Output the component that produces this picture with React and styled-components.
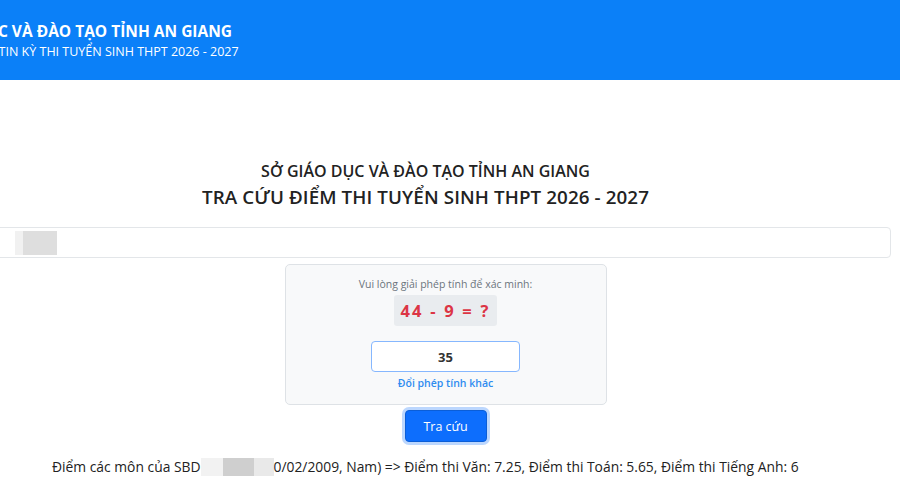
import React from "react";
import styled, { createGlobalStyle } from "styled-components";

const GlobalStyle = createGlobalStyle`
  html, body {
    margin: 0;
    padding: 0;
    background: #ffffff;
    overflow: hidden;
  }
  body {
    font-family: "Open Sans", "Noto Sans", sans-serif;
    color: #212529;
  }
`;

const App = () => {
  return (
    <>
      <GlobalStyle />
      <Header>
        <HeaderInner>
          <HeaderTitle>SỞ GIÁO DỤC VÀ ĐÀO TẠO TỈNH AN GIANG</HeaderTitle>
          <HeaderSub>THÔNG TIN KỲ THI TUYỂN SINH THPT 2026 - 2027</HeaderSub>
        </HeaderInner>
      </Header>

      <Main>
        <TitleBlock>
          <Dept>SỞ GIÁO DỤC VÀ ĐÀO TẠO TỈNH AN GIANG</Dept>
          <PageTitle>TRA CỨU ĐIỂM THI TUYỂN SINH THPT 2026 - 2027</PageTitle>
        </TitleBlock>

        <SearchField>
          <Redacted />
        </SearchField>

        <Captcha>
          <CaptchaHint>Vui lòng giải phép tính để xác minh:</CaptchaHint>
          <MathBox>44 - 9 = ?</MathBox>
          <AnswerInput defaultValue="35" />
          <SwapLink href="#">Đổi phép tính khác</SwapLink>
        </Captcha>

        <SubmitButton type="button">Tra cứu</SubmitButton>

        <Result>
          Điểm các môn của SBD<Masked />0/02/2009, Nam) =&gt; Điểm thi Văn: 7.25,
          Điểm thi Toán: 5.65, Điểm thi Tiếng Anh: 6
        </Result>
      </Main>
    </>
  );
};

// Styled Components
const Header = styled.header`
  height: 80px;
  background: #0b80f8;
  display: flex;
  align-items: center;
  overflow: hidden;
`;

const HeaderInner = styled.div`
  margin-top: 2px;
  color: #ffffff;
  white-space: nowrap;
`;

const HeaderTitle = styled.div`
  margin-left: -94px;
  font-size: 15.5px;
  font-weight: 700;
  line-height: 21px;
`;

const HeaderSub = styled.div`
  margin-left: -49px;
  font-size: 12.5px;
  font-weight: 400;
  line-height: 20px;
`;

const Main = styled.main`
  width: 911px;
  margin-left: -10px;
  padding-top: 81px;
  display: flex;
  flex-direction: column;
  align-items: center;
`;

const TitleBlock = styled.div`
  display: flex;
  flex-direction: column;
  align-items: center;
  padding-right: 40px;
  color: #222;
`;

const Dept = styled.div`
  font-size: 16px;
  font-weight: 600;
  line-height: 20px;
`;

const PageTitle = styled.h1`
  margin: 3px 0 0;
  font-size: 18.8px;
  font-weight: 600;
  line-height: 26px;
  letter-spacing: 0.1px;
`;

const SearchField = styled.div`
  box-sizing: border-box;
  align-self: flex-start;
  width: 901px;
  height: 31px;
  margin-top: 17px;
  border: 1px solid #e3e6e9;
  border-radius: 4px;
  background: #ffffff;
  display: flex;
  align-items: center;
  padding-left: 24px;
`;

const Redacted = styled.div`
  width: 42px;
  height: 24px;
  background: linear-gradient(90deg, #f1f1f1 0 20%, #dedede 20% 100%);
`;

const Captcha = styled.div`
  box-sizing: border-box;
  width: 322px;
  margin-top: 6px;
  padding: 12px 16px 13px;
  background: #f8f9fa;
  border: 1px solid #dee2e6;
  border-radius: 5px;
  display: flex;
  flex-direction: column;
  align-items: center;
`;

const CaptchaHint = styled.div`
  font-size: 10.5px;
  color: #6c757d;
  line-height: 14px;
`;

const MathBox = styled.div`
  margin-top: 4px;
  width: 103px;
  height: 31px;
  display: flex;
  align-items: center;
  justify-content: center;
  background: #e9ecef;
  border-radius: 3px;
  color: #dc3545;
  font-size: 16.5px;
  font-weight: 700;
  letter-spacing: 2.2px;
  white-space: pre;
`;

const AnswerInput = styled.input`
  box-sizing: border-box;
  margin-top: 15px;
  width: 149px;
  height: 31px;
  border: 1.5px solid #86b7fe;
  border-radius: 4px;
  background: #ffffff;
  text-align: center;
  font-family: "Open Sans", sans-serif;
  font-size: 13px;
  font-weight: 700;
  color: #333;
  outline: none;
`;

const SwapLink = styled.a`
  margin-top: 4px;
  font-size: 10.5px;
  font-weight: 600;
  color: #2f8cf0;
  text-decoration: none;
  line-height: 15px;
`;

const SubmitButton = styled.button`
  margin-top: 5px;
  width: 82px;
  height: 32px;
  border: 1px solid #0b5ed7;
  border-radius: 4px;
  background: #0d6efd;
  color: #ffffff;
  font-family: "Open Sans", sans-serif;
  font-size: 12.5px;
  box-shadow: 0 0 0 3px rgba(13, 110, 253, 0.28);
  cursor: pointer;
`;

const Result = styled.p`
  align-self: flex-start;
  margin: 15px 0 0 62px;
  font-size: 13.85px;
  line-height: 20px;
  color: #222;
  white-space: nowrap;
`;

const Masked = styled.span`
  display: inline-block;
  vertical-align: middle;
  width: 73px;
  height: 18px;
  margin-top: -3px;
  background: linear-gradient(90deg, #f2f2f2 0 30%, #cfcfcf 30% 72%, #e9e9e9 72% 100%);
`;

export default App;
